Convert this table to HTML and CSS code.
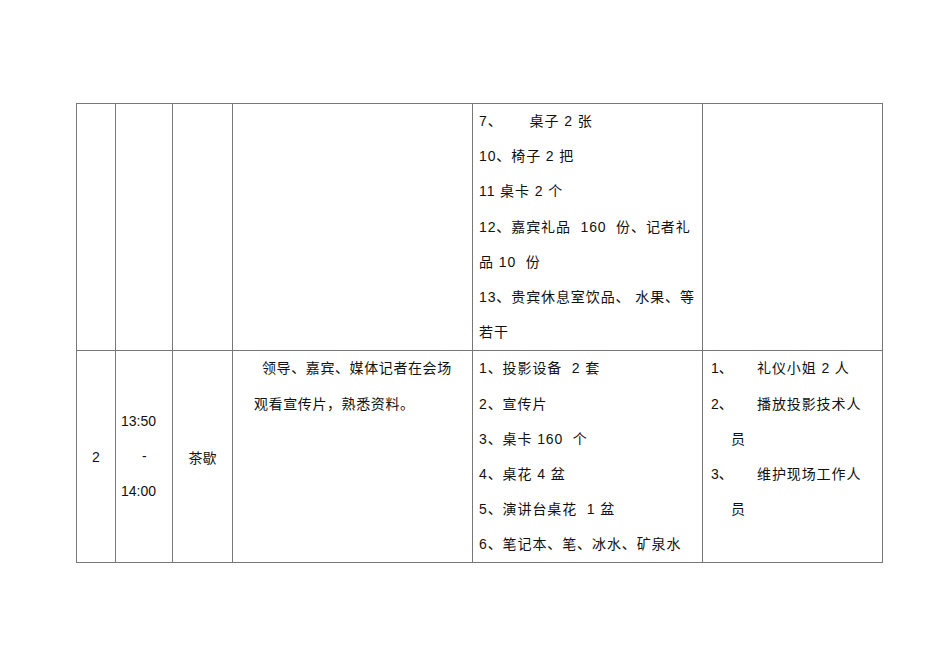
FILE: index.html
```html
<!DOCTYPE html>
<html lang="zh-CN">
<head>
<meta charset="utf-8">
<title>会议安排</title>
<link rel="stylesheet" href="styles.css">
</head>
<body>
<table class="sheet">
  <colgroup>
    <col class="c1"><col class="c2"><col class="c3"><col class="c4"><col class="c5"><col class="c6">
  </colgroup>
  <tr class="r1">
    <td></td>
    <td></td>
    <td></td>
    <td></td>
    <td class="list">
      <div class="ln">7、<span class="gap7"></span>桌子 2 张</div>
      <div class="ln">10、椅子 2 把</div>
      <div class="ln">11 桌卡 2 个</div>
      <div class="ln">12、嘉宾礼品  160  份、记者礼</div>
      <div class="ln">品 10  份</div>
      <div class="ln">13、贵宾休息室饮品、 水果、等</div>
      <div class="ln">若干</div>
    </td>
    <td></td>
  </tr>
  <tr class="r2">
    <td class="mid">2</td>
    <td class="time">
      <div class="ln">13:50</div>
      <div class="ln dash">-</div>
      <div class="ln">14:00</div>
    </td>
    <td class="mid">茶歇</td>
    <td class="desc">
      <div class="ln first">领导、嘉宾、媒体记者在会场</div>
      <div class="ln">观看宣传片，熟悉资料。</div>
    </td>
    <td class="list">
      <div class="ln">1、投影设备  2 套</div>
      <div class="ln">2、宣传片</div>
      <div class="ln">3、桌卡 160  个</div>
      <div class="ln">4、桌花 4 盆</div>
      <div class="ln">5、演讲台桌花  1 盆</div>
      <div class="ln">6、笔记本、笔、冰水、矿泉水</div>
    </td>
    <td class="staff">
      <div class="ln"><span class="num">1、</span>礼仪小姐 2 人</div>
      <div class="ln"><span class="num">2、</span>播放投影技术人</div>
      <div class="ln wrap">员</div>
      <div class="ln"><span class="num">3、</span>维护现场工作人</div>
      <div class="ln wrap">员</div>
    </td>
  </tr>
</table>
</body>
</html>
```
FILE: styles.css
```css
html, body {
  margin: 0;
  padding: 0;
  background: #ffffff;
}

body {
  font-family: "Liberation Sans", "Noto Sans CJK SC", sans-serif;
  font-size: 14px;
  color: #111111;
}

.sheet {
  margin: 103px 0 0 76px;
  border-collapse: collapse;
  table-layout: fixed;
  width: 806px;
}

.c1 { width: 39px; }
.c2 { width: 57px; }
.c3 { width: 60px; }
.c4 { width: 240px; }
.c5 { width: 230px; }
.c6 { width: 180px; }

.sheet td {
  border: 1px solid #777777;
  padding: 0;
  vertical-align: top;
}

.r1 td { height: 245px; }
.r2 td { height: 210px; }

.ln {
  height: 35.2px;
  line-height: 35.2px;
  white-space: pre;
}

.list { padding-left: 6px !important; }

.list .ln,
.staff .ln { letter-spacing: 0.9px; }

.gap7 {
  display: inline-block;
  width: 27px;
}

.sheet td.mid {
  text-align: center;
  vertical-align: middle;
}

.sheet td.time {
  vertical-align: middle;
  padding-left: 5px;
}

.dash { padding-left: 21px; }

.sheet td.desc { padding-left: 21px; }

.desc .ln { letter-spacing: 0.6px; }
.desc .first { padding-left: 8px; }

.sheet td.staff { padding-left: 8px; }

.num {
  display: inline-block;
  width: 46px;
  letter-spacing: 0;
}

.wrap { padding-left: 20px; }
```
